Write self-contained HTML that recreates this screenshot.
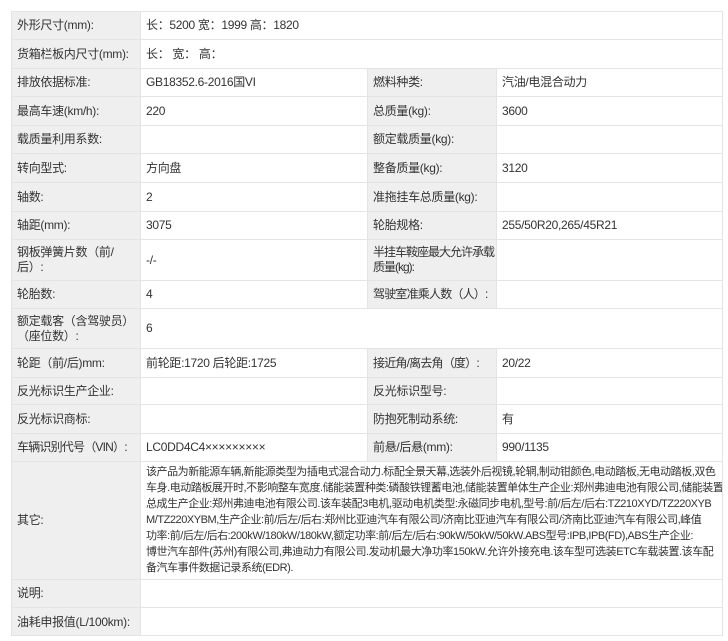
<!DOCTYPE html>
<html><head><meta charset="utf-8"><style>
html,body{margin:0;padding:0;background:#fff;width:728px;height:641px;overflow:hidden}
body{font-family:"Liberation Sans","Noto Sans CJK SC",sans-serif;font-size:12px;color:#333;position:relative}
.c{position:absolute;box-sizing:border-box;border-top:1px solid #e4e4e4;border-left:1px solid #e4e4e4;padding:0 2px 0 5px;display:flex;align-items:center;line-height:15px;overflow:hidden;letter-spacing:-0.3px;white-space:nowrap}
.l{background:#efefef}
.o{font-size:11px;line-height:16px;letter-spacing:-0.45px;align-items:flex-start;padding-top:2px}
#f{position:absolute;left:11px;top:11px;width:712px;height:625px;border-right:1px solid #e4e4e4;border-bottom:1px solid #e4e4e4;box-sizing:border-box;pointer-events:none}
</style></head><body>
<div class="c l" style="left:11px;top:11px;width:129px;height:28px">外形尺寸(mm):</div>
<div class="c" style="left:140px;top:11px;width:583px;height:28px">长：5200 宽：1999 高：1820</div>
<div class="c l" style="left:11px;top:39px;width:129px;height:29px">货箱栏板内尺寸(mm):</div>
<div class="c" style="left:140px;top:39px;width:583px;height:29px">长：&nbsp;宽：&nbsp;高：</div>

<div class="c l" style="left:11px;top:68px;width:129px;height:28px">排放依据标准:</div>
<div class="c" style="left:140px;top:68px;width:227px;height:28px">GB18352.6-2016国VI</div>
<div class="c l" style="left:367px;top:68px;width:129px;height:28px">燃料种类:</div>
<div class="c" style="left:496px;top:68px;width:227px;height:28px">汽油/电混合动力</div>

<div class="c l" style="left:11px;top:96px;width:129px;height:29px">最高车速(km/h):</div>
<div class="c" style="left:140px;top:96px;width:227px;height:29px">220</div>
<div class="c l" style="left:367px;top:96px;width:129px;height:29px">总质量(kg):</div>
<div class="c" style="left:496px;top:96px;width:227px;height:29px">3600</div>

<div class="c l" style="left:11px;top:125px;width:129px;height:28px">载质量利用系数:</div>
<div class="c" style="left:140px;top:125px;width:227px;height:28px"></div>
<div class="c l" style="left:367px;top:125px;width:129px;height:28px">额定载质量(kg):</div>
<div class="c" style="left:496px;top:125px;width:227px;height:28px"></div>

<div class="c l" style="left:11px;top:153px;width:129px;height:29px">转向型式:</div>
<div class="c" style="left:140px;top:153px;width:227px;height:29px">方向盘</div>
<div class="c l" style="left:367px;top:153px;width:129px;height:29px">整备质量(kg):</div>
<div class="c" style="left:496px;top:153px;width:227px;height:29px">3120</div>

<div class="c l" style="left:11px;top:182px;width:129px;height:29px">轴数:</div>
<div class="c" style="left:140px;top:182px;width:227px;height:29px">2</div>
<div class="c l" style="left:367px;top:182px;width:129px;height:29px">准拖挂车总质量(kg):</div>
<div class="c" style="left:496px;top:182px;width:227px;height:29px"></div>

<div class="c l" style="left:11px;top:211px;width:129px;height:28px">轴距(mm):</div>
<div class="c" style="left:140px;top:211px;width:227px;height:28px">3075</div>
<div class="c l" style="left:367px;top:211px;width:129px;height:28px">轮胎规格:</div>
<div class="c" style="left:496px;top:211px;width:227px;height:28px">255/50R20,265/45R21</div>

<div class="c l" style="left:11px;top:239px;width:129px;height:41px"><span>钢板弹簧片数（前/<br>后）:</span></div>
<div class="c" style="left:140px;top:239px;width:227px;height:41px">-/-</div>
<div class="c l" style="left:367px;top:239px;width:129px;height:41px;letter-spacing:-1px"><span>半挂车鞍座最大允许承载<br>质量(kg):</span></div>
<div class="c" style="left:496px;top:239px;width:227px;height:41px"></div>

<div class="c l" style="left:11px;top:280px;width:129px;height:28px">轮胎数:</div>
<div class="c" style="left:140px;top:280px;width:227px;height:28px">4</div>
<div class="c l" style="left:367px;top:280px;width:129px;height:28px;letter-spacing:-0.8px">驾驶室准乘人数（人）:</div>
<div class="c" style="left:496px;top:280px;width:227px;height:28px"></div>

<div class="c l" style="left:11px;top:308px;width:129px;height:40px"><span>额定载客（含驾驶员）<br>（座位数）:</span></div>
<div class="c" style="left:140px;top:308px;width:583px;height:40px">6</div>

<div class="c l" style="left:11px;top:348px;width:129px;height:29px">轮距（前/后)mm:</div>
<div class="c" style="left:140px;top:348px;width:227px;height:29px">前轮距:1720 后轮距:1725</div>
<div class="c l" style="left:367px;top:348px;width:129px;height:29px;letter-spacing:-0.8px">接近角/离去角（度）:</div>
<div class="c" style="left:496px;top:348px;width:227px;height:29px">20/22</div>

<div class="c l" style="left:11px;top:377px;width:129px;height:27px">反光标识生产企业:</div>
<div class="c" style="left:140px;top:377px;width:227px;height:27px"></div>
<div class="c l" style="left:367px;top:377px;width:129px;height:27px">反光标识型号:</div>
<div class="c" style="left:496px;top:377px;width:227px;height:27px"></div>

<div class="c l" style="left:11px;top:404px;width:129px;height:29px">反光标识商标:</div>
<div class="c" style="left:140px;top:404px;width:227px;height:29px"></div>
<div class="c l" style="left:367px;top:404px;width:129px;height:29px">防抱死制动系统:</div>
<div class="c" style="left:496px;top:404px;width:227px;height:29px">有</div>

<div class="c l" style="left:11px;top:433px;width:129px;height:28px;letter-spacing:-0.8px">车辆识别代号（VIN）:</div>
<div class="c" style="left:140px;top:433px;width:227px;height:28px">LC0DD4C4×××××××××</div>
<div class="c l" style="left:367px;top:433px;width:129px;height:28px">前悬/后悬(mm):</div>
<div class="c" style="left:496px;top:433px;width:227px;height:28px">990/1135</div>

<div class="c l" style="left:11px;top:461px;width:129px;height:118px">其它:</div>
<div class="c o" style="left:140px;top:461px;width:583px;height:118px"><span>该产品为新能源车辆,新能源类型为插电式混合动力.标配全景天幕,选装外后视镜,轮辋,制动钳颜色,电动踏板,无电动踏板,双色<br>车身.电动踏板展开时,不影响整车宽度.储能装置种类:磷酸铁锂蓄电池,储能装置单体生产企业:郑州弗迪电池有限公司,储能装置<br>总成生产企业:郑州弗迪电池有限公司.该车装配3电机,驱动电机类型:永磁同步电机,型号:前/后左/后右:TZ210XYD/TZ220XYB<br>M/TZ220XYBM,生产企业:前/后左/后右:郑州比亚迪汽车有限公司/济南比亚迪汽车有限公司/济南比亚迪汽车有限公司,峰值<br>功率:前/后左/后右:200kW/180kW/180kW,额定功率:前/后左/后右:90kW/50kW/50kW.ABS型号:IPB,IPB(FD),ABS生产企业:<br>博世汽车部件(苏州)有限公司,弗迪动力有限公司.发动机最大净功率150kW.允许外接充电.该车型可选装ETC车载装置.该车配<br>备汽车事件数据记录系统(EDR).</span></div>

<div class="c l" style="left:11px;top:579px;width:129px;height:28px">说明:</div>
<div class="c" style="left:140px;top:579px;width:583px;height:28px"></div>
<div class="c l" style="left:11px;top:607px;width:129px;height:29px">油耗申报值(L/100km):</div>
<div class="c" style="left:140px;top:607px;width:583px;height:29px"></div>
<div id="f"></div>
</body></html>
